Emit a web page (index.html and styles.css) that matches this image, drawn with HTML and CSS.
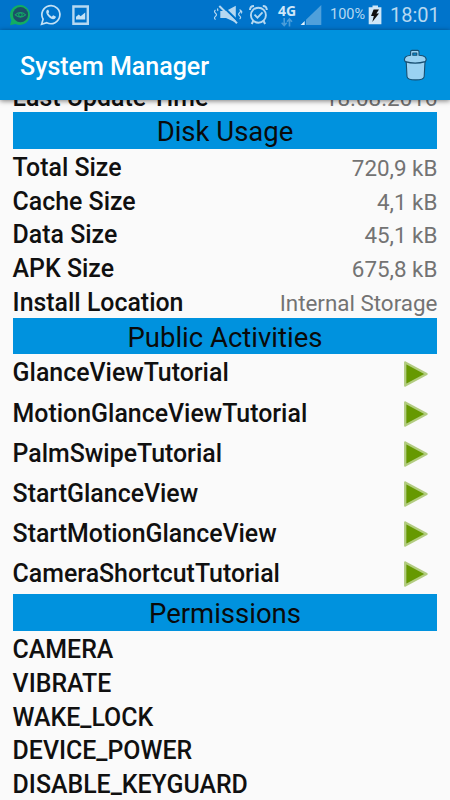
FILE: index.html
```html
<!DOCTYPE html>
<html lang="en">
<head>
<meta charset="utf-8">
<meta name="viewport" content="width=device-width">
<title>System Manager</title>
<link rel="stylesheet" href="styles.css">
</head>
<body>
<div class="screen">
  <div class="status">
    <svg class="notif" width="100" height="30" viewBox="0 0 100 30">
      <path d="M10 25.2 L11.4 20.2 A10 10 0 1 1 15.4 23.9 Z" fill="#12ad62"/>
      <circle cx="20.5" cy="14.7" r="7.6" fill="#1c4f68"/>
      <path d="M15.2 14.8 Q20.5 10.2 25.6 14.8 Q20.5 19.4 15.2 14.8Z" fill="none" stroke="#12a866" stroke-width="1.1"/>
      <circle cx="20.4" cy="14.8" r="1.8" fill="none" stroke="#12a866" stroke-width="1.1"/>
      <path d="M41.6 24.2 L43.1 19.2 A9 9 0 1 1 46.8 22.7 Z" fill="none" stroke="#c4e1f5" stroke-width="1.7"/>
      <path d="M47.4 9.7 Q46 10.6 46.2 12.3 C46.8 15.7 50 18.9 53.2 19.2 Q55.2 19.2 55.9 17.3 L55.7 16.5 L53.1 15.3 L51.8 16.7 Q49.5 15.7 48.3 13.3 L49.2 12 L48.3 9.7Z" fill="#c4e1f5"/>
      <path d="M72.2 5.2H89V25H72.2ZM74.6 7.8V22.4H86.6V7.8Z" fill="#b5d8f1" fill-rule="evenodd"/>
      <path d="M76 19.4V16.8L78.8 14.5L80.6 16.2L85.2 12.5V19.4Z" fill="#c4e1f5"/>
    </svg>
    <div class="indicators">
      <svg width="58" height="30" viewBox="212 0 58 30" fill="none" stroke="#b5d8f1">
        <path d="M220.3 11H226L235.8 5.8V22.5L226 18H220.3Z" fill="#b5d8f1" stroke="none"/>
        <path d="M220.8 4.5L238.6 21.8" stroke="#0074cb" stroke-width="2.2"/>
        <path d="M219.3 6L237 23.3" stroke-width="2"/>
        <path d="M215.5 10q-2 1.6 0 3.2t0 3.2t0 3.2M218 8.5q-1 1 0 2.5M239.6 9.5q2 1.6 0 3.2t0 3.2t0 3.2M241.3 10.5q1 1.5 0 3" stroke-width="1.2"/>
        <circle cx="258.4" cy="15.2" r="7.5" stroke-width="1.9"/>
        <path d="M254.5 14.6L257.5 17.7L262.5 12.3" stroke-width="1.8"/>
        <path d="M250 10Q250 6 254 5.9M262.8 5.9Q266.8 6 266.8 10M253.2 21L251.7 24M263.6 21L265.1 24" stroke-width="2"/>
      </svg>
      <div class="network"><span>4G</span>
        <svg width="12" height="10" viewBox="0 0 12 10"><path d="M3.2 0V7M.7 4.8L3.2 7.5L5.7 4.8M8.5 8.5V1.5M6 3.8L8.5 1L11 3.8" stroke="#4c9eda" stroke-width="1.6" fill="none"/></svg>
      </div>
      <svg width="22" height="30" viewBox="300 0 22 30"><path d="M321.3 5V25H300.5Z" fill="#4fa0db"/><path d="M300 26V20.5L306 14V26Z" fill="#0074cb"/><path d="M304.7 21V25H300.6Z" fill="#e2f1fb"/></svg>
      <span class="percent">100%</span>
      <svg class="battery" width="14" height="30" viewBox="368 0 14 30"><path d="M372.5 5.5H378V7.3H381.4V24.3H368.7V7.3H372.5Z" fill="#cfe7f8"/><path d="M373.6 9.5H379L376.4 13.4H379L372.3 22L373.8 16H371Z" fill="#111"/></svg>
      <time>18:01</time>
    </div>
  </div>
  <header class="bar">
    <h1>System Manager</h1>
    <svg width="24" height="32" viewBox="403 48 24 32" fill="#9ad2f2" stroke="#174f72" stroke-width="1.1" stroke-linejoin="round">
      <path d="M406.2 60.5H425L424.2 75.5Q424 78.9 415.6 78.9Q407.2 78.9 407 75.5Z"/>
      <path d="M405.3 60.6Q403.4 58.5 405.6 55.9Q407 54.7 410.6 54.3V50.8Q410.6 49.4 412 49.4H417.6Q419 49.4 419 50.8V54.3Q423.5 54.6 425 55.9Q427.2 58.5 425.3 60.6Q415 63.6 405.3 60.6Z"/>
      <path d="M412.8 52H416.8V54.2H412.8Z" fill="#0092de"/>
    </svg>
  </header>
  <main class="content">
    <div class="row"><b>Last Update Time</b><span>18.08.2016</span></div>
    <h2>Disk Usage</h2>
    <div class="row"><b>Total Size</b><span>720,9 kB</span></div>
    <div class="row"><b>Cache Size</b><span>4,1 kB</span></div>
    <div class="row"><b>Data Size</b><span>45,1 kB</span></div>
    <div class="row"><b>APK Size</b><span>675,8 kB</span></div>
    <div class="row"><b>Install Location</b><span>Internal Storage</span></div>
    <h2>Public Activities</h2>
    <div class="row activity"><b>GlanceViewTutorial</b><svg class="play" viewBox="0 0 26 28"><path d="M2.2 2.4L23.6 14L2.2 25.6Z"/></svg></div>
    <div class="row activity"><b>MotionGlanceViewTutorial</b><svg class="play" viewBox="0 0 26 28"><path d="M2.2 2.4L23.6 14L2.2 25.6Z"/></svg></div>
    <div class="row activity"><b>PalmSwipeTutorial</b><svg class="play" viewBox="0 0 26 28"><path d="M2.2 2.4L23.6 14L2.2 25.6Z"/></svg></div>
    <div class="row activity"><b>StartGlanceView</b><svg class="play" viewBox="0 0 26 28"><path d="M2.2 2.4L23.6 14L2.2 25.6Z"/></svg></div>
    <div class="row activity"><b>StartMotionGlanceView</b><svg class="play" viewBox="0 0 26 28"><path d="M2.2 2.4L23.6 14L2.2 25.6Z"/></svg></div>
    <div class="row activity"><b>CameraShortcutTutorial</b><svg class="play" viewBox="0 0 26 28"><path d="M2.2 2.4L23.6 14L2.2 25.6Z"/></svg></div>
    <h2>Permissions</h2>
    <div class="row"><b>CAMERA</b></div>
    <div class="row"><b>VIBRATE</b></div>
    <div class="row"><b>WAKE_LOCK</b></div>
    <div class="row"><b>DEVICE_POWER</b></div>
    <div class="row"><b>DISABLE_KEYGUARD</b></div>
  </main>
</div>
</body>
</html>
```
FILE: styles.css
```css
* { box-sizing: border-box; }
body { margin: 0; font-family: Roboto, sans-serif; background: #fafafa; }
svg { display: block; flex: none; }
.screen { width: 450px; height: 800px; overflow: hidden; display: flex; flex-direction: column; }
.status { height: 30px; flex: none; background: #0074cb; display: flex; justify-content: space-between; color: #b5d8f1; }
.indicators { display: flex; align-items: center; padding-right: 12px; }
.network { width: 18px; height: 30px; margin: 0 4px 0 8px; padding-top: 4px; font: bold 14px/13px "Open Sans", sans-serif; display: flex; flex-direction: column; align-items: center; color: #cfe7f8; }
.network svg { margin-top: 1px; }
.percent { width: 38px; margin-left: 8px; font-size: 14.5px; line-height: 32px; white-space: nowrap; }
.battery { margin-right: 8px; }
time { width: 48px; font-size: 20px; line-height: 33px; text-align: right; white-space: nowrap; }
.bar { height: 70px; flex: none; background: #0092de; display: flex; align-items: center; justify-content: space-between; padding: 0 23px 0 20px; box-shadow: 0 1px 5px rgba(0, 0, 0, .5); z-index: 1; }
h1 { margin: 3px 0 0; font-size: 25px; font-weight: 500; line-height: 32px; color: #fff; }
.content { flex: 1; min-height: 0; overflow: hidden; padding: 0 12.6px; margin-top: -21.5px; }
h2 { margin: 0; height: 36.6px; background: #0092de; color: #0a0a0a; font-size: 27.5px; font-weight: 400; line-height: 40.5px; text-align: center; }
.row { height: 33.75px; display: flex; justify-content: space-between; align-items: baseline; line-height: 37.5px; color: #101010; }
.row b { font-size: 24.9px; font-weight: 500; }
.row span { font-size: 22.4px; color: #737373; }
.activity { height: 40.05px; align-items: center; }
.activity b { margin-top: -2px; }
.play { width: 26px; height: 28px; margin-right: 8.5px; }
.play path { fill: #669900; stroke: #b2cc80; stroke-width: 2.3; stroke-linejoin: round; }
```
